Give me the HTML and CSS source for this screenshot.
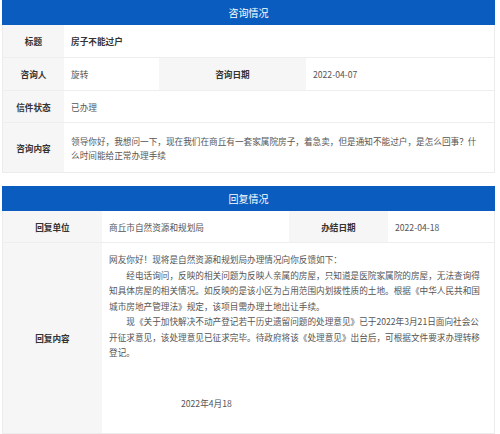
FILE: index.html
```html
<!DOCTYPE html>
<html lang="zh-CN">
<head>
<meta charset="utf-8">
<title>咨询情况</title>
<link rel="stylesheet" href="styles.css">
</head>
<body>
<div class="page">
  <section class="panel panel-ask">
    <div class="head">咨询情况</div>
    <div class="cell label h33">标题</div>
    <div class="cell value span3 strong h33">房子不能过户</div>
    <div class="cell label h33">咨询人</div>
    <div class="cell value h33">旋转</div>
    <div class="cell label h33">咨询日期</div>
    <div class="cell value h33">2022-04-07</div>
    <div class="cell label h32">信件状态</div>
    <div class="cell value span3 h32">已办理</div>
    <div class="cell label h49 last">咨询内容</div>
    <div class="cell value span3 h49 last text">领导你好，我想问一下，现在我们在商丘有一套家属院房子，着急卖，但是通知不能过户，是怎么回事？什么时间能给正常办理手续</div>
  </section>

  <section class="panel panel-reply">
    <div class="head">回复情况</div>
    <div class="cell label h32">回复单位</div>
    <div class="cell value h32">商丘市自然资源和规划局</div>
    <div class="cell label h32">办结日期</div>
    <div class="cell value h32">2022-04-18</div>
    <div class="cell label last reply-label">回复内容</div>
    <div class="cell value span3 last reply">
      <p>网友你好！现将是自然资源和规划局办理情况向你反馈如下：</p>
      <p class="indent">经电话询问，反映的相关问题为反映人亲属的房屋，只知道是医院家属院的房屋，无法查询得知具体房屋的相关情况。如反映的是该小区为占用范围内划拨性质的土地。根据《中华人民共和国城市房地产管理法》规定，该项目需办理土地出让手续。</p>
      <p class="indent">现《关于加快解决不动产登记若干历史遗留问题的处理意见》已于2022年3月21日面向社会公开征求意见，该处理意见已征求完毕。待政府将该《处理意见》出台后，可根据文件要求办理转移登记。</p>
      <p class="date">2022年4月18</p>
    </div>
  </section>
</div>
</body>
</html>
```

FILE: styles.css
```css
html, body {
  margin: 0;
  padding: 0;
  background: #ffffff;
}

body {
  font-family: "Noto Sans CJK SC", "Noto Sans", sans-serif;
  font-size: 8.65px;
  color: #555555;
}

.page {
  padding: 0 5px 0 2px;
  width: 493px;
}

.panel {
  display: grid;
  border: 1px solid #ececec;
  border-top: none;
  box-sizing: border-box;
  width: 493px;
}

.panel-ask {
  grid-template-columns: 61px 95px 147px 1fr;
}

.panel-reply {
  margin-top: 13px;
  grid-template-columns: 99px 187px 99px 1fr;
}

.head {
  grid-column: 1 / -1;
  height: 25px;
  margin: 0 -1px;
  background: #0a5dbf;
  color: #ffffff;
  font-size: 10px;
  display: flex;
  align-items: center;
  justify-content: center;
}

.cell {
  box-sizing: border-box;
  border-bottom: 1px solid #eeeeee;
  display: flex;
  align-items: center;
}

.cell.last {
  border-bottom: none;
}

.label {
  background: #f6f6f6;
  color: #333333;
  font-weight: 700;
  justify-content: center;
}

.value {
  padding: 0 14px 0 7px;
  background: #ffffff;
}

.span3 {
  grid-column: span 3;
}

.strong {
  color: #333333;
  font-weight: 700;
}

.h33 { height: 33px; }
.h32 { height: 32px; }
.h49 { height: 49px; }

.text {
  line-height: 14px;
}

.reply-label {
  height: 190px;
}

.reply {
  display: block;
  padding: 9px 12px 0 7px;
  line-height: 15.5px;
}

.reply p {
  margin: 0;
}

.reply .indent {
  text-indent: 2em;
}

.reply .date {
  margin-top: 35px;
  padding-left: 72px;
}
```
